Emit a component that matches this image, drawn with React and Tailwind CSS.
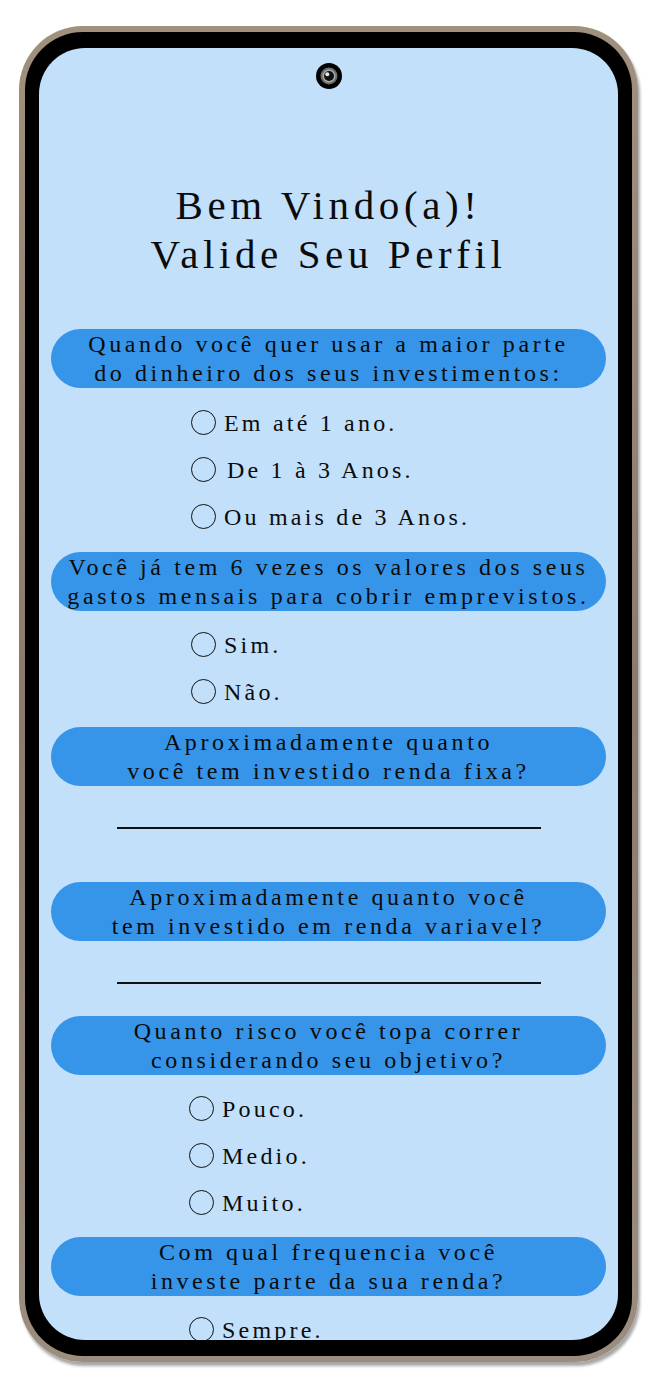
import React from "react";

const font = { fontFamily: '"Liberation Serif", "DejaVu Serif", serif' };

function Pill({ lines, className = "" }) {
  return (
    <div
      className={`mx-[12px] h-[59px] rounded-full bg-[#3795e9] flex flex-col items-center justify-center text-[24px] leading-[29px] tracking-[3.6px] text-[#0b0b0b] ${className}`}
    >
      {lines.map((l, i) => (
        <span key={i} className="whitespace-nowrap">{l}</span>
      ))}
    </div>
  );
}

function Option({ label, indent = "" }) {
  return (
    <div className="h-[47px] flex items-center gap-[8px]">
      <span className="w-[25px] h-[25px] rounded-full border border-[#111] shrink-0" />
      <span className={`text-[24px] tracking-[3.2px] text-[#0b0b0b] whitespace-nowrap ${indent}`}>{label}</span>
    </div>
  );
}

function Camera() {
  return (
    <svg width="28" height="28" viewBox="0 0 28 28">
      <circle cx="14" cy="14" r="13" fill="#000" />
      <circle cx="14" cy="14" r="8.5" fill="#6d6d6d" />
      <circle cx="14" cy="14" r="6.5" fill="#a9a9a9" />
      <circle cx="14" cy="14" r="5" fill="#111" />
      <circle cx="12.3" cy="12.3" r="2" fill="#e8e8e8" />
    </svg>
  );
}

export default function App() {
  return (
    <div className="w-[657px] h-[1388px] bg-white pt-[26px] pl-[19px]" style={font}>
      <div className="w-[619px] h-[1336px] rounded-[64px] p-[6px] bg-gradient-to-b from-[#a0917f] via-[#8a7b6b] to-[#9c8e7e] shadow-[2px_4px_3px_rgba(0,0,0,0.35)]">
        <div className="w-full h-full rounded-[58px] bg-black px-[14px] pt-[16px] pb-[16px]">
          <div className="w-full h-full rounded-[46px] bg-[#c2e0fa] overflow-hidden">
            <div className="flex justify-center pt-[14px]">
              <Camera />
            </div>
            <div className="mt-[91px] flex flex-col items-center text-[41px] leading-[49px] tracking-[4.6px] text-[#0b0b0b]">
              <span>Bem Vindo(a)!</span>
              <span>Valide Seu Perfil</span>
            </div>
            <Pill className="mt-[50px]" lines={["Quando você quer usar a maior parte", "do dinheiro dos seus investimentos:"]} />
            <div className="pl-[152px] pt-[11px]">
              <Option label="Em até 1 ano." />
              <Option label="De 1 à 3 Anos." indent="ml-[3px]" />
              <Option label="Ou mais de 3 Anos." />
            </div>
            <Pill className="mt-[12px]" lines={["Você já tem 6 vezes os valores dos seus", "gastos mensais para cobrir emprevistos."]} />
            <div className="pl-[152px] pt-[10px]">
              <Option label="Sim." />
              <Option label="Não." />
            </div>
            <Pill className="mt-[12px]" lines={["Aproximadamente quanto", "você tem investido renda fixa?"]} />
            <div className="mt-[41px] mx-auto w-[424px] h-[2px] bg-[#111]" />
            <Pill className="mt-[53px]" lines={["Aproximadamente quanto você", "tem investido em renda variavel?"]} />
            <div className="mt-[41px] mx-auto w-[424px] h-[2px] bg-[#111]" />
            <Pill className="mt-[32px]" lines={["Quanto risco você topa correr", "considerando seu objetivo?"]} />
            <div className="pl-[150px] pt-[10px]">
              <Option label="Pouco." />
              <Option label="Medio." />
              <Option label="Muito." />
            </div>
            <Pill className="mt-[11px]" lines={["Com qual frequencia você", "investe parte da sua renda?"]} />
            <div className="pl-[150px] pt-[10px]">
              <Option label="Sempre." />
            </div>
          </div>
        </div>
      </div>
    </div>
  );
}
